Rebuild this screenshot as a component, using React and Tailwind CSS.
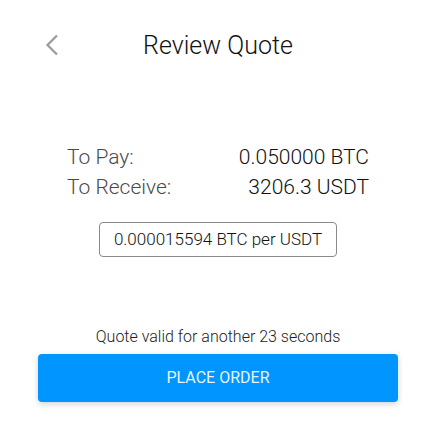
import React from "react";

export default function App() {
  return (
    <div className="w-[436px] h-[447px] bg-white" style={{ fontFamily: "Roboto, 'Noto Sans', sans-serif" }}>
      <div className="grid grid-cols-[1fr_auto_1fr] items-center h-[90px]">
        <div className="pl-[45px] flex items-center">
          <svg width="14" height="22" viewBox="0 0 14 22" fill="none">
            <path d="M12 1.5 L2.5 11 L12 20.5" stroke="#9a9a9a" strokeWidth="2.2" />
          </svg>
        </div>
        <div className="text-[25px] font-light text-[#111] leading-none">Review Quote</div>
        <div />
      </div>
      <div className="w-[302px] mx-auto mt-[52px] text-[21px] leading-[30px] font-light">
        <div className="flex justify-between">
          <span className="text-[#4a4a4a]">To Pay:</span>
          <span className="text-[#111]">0.050000 BTC</span>
        </div>
        <div className="flex justify-between">
          <span className="text-[#4a4a4a]">To Receive:</span>
          <span className="text-[#111]">3206.3 USDT</span>
        </div>
      </div>
      <div className="mt-[20px] flex justify-center">
        <div className="w-[238px] h-[35px] border border-[#8a8a8a] rounded-[4px] flex items-center justify-center text-[17px] font-light text-[#111]">
          0.000015594 BTC per USDT
        </div>
      </div>
      <div className="mt-[68px] text-center text-[16px] leading-[24px] font-light text-[#222]">
        Quote valid for another 23 seconds
      </div>
      <div className="mt-[5px] flex justify-center">
        <button className="w-[360px] h-[48px] rounded-[4px] bg-[#0095ff] text-[#e6f4ff] text-[16px] shadow-[0_2px_6px_rgba(0,0,0,0.18)]">
          PLACE ORDER
        </button>
      </div>
    </div>
  );
}
